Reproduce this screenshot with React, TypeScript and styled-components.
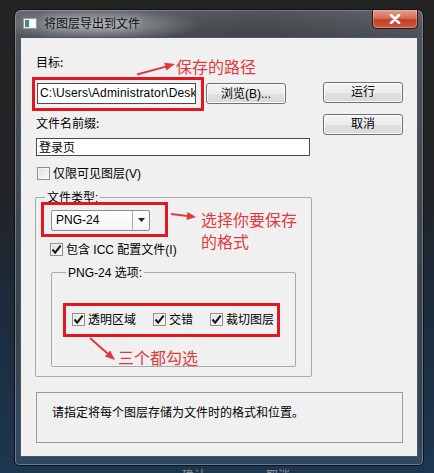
import React from "react";
import styled, { createGlobalStyle } from "styled-components";

const Global = createGlobalStyle`
  html, body { margin: 0; padding: 0; }
  body {
    width: 434px; height: 473px; overflow: hidden; background: #202022;
    font-family: "Liberation Sans", "Noto Sans CJK SC", sans-serif;
  }
  * { box-sizing: border-box; }
`;

const FONT = `"Liberation Sans", "Noto Sans CJK SC", sans-serif`;
const CJK = `"Noto Sans CJK SC", sans-serif`;
const RED = "#e3171f";
const RED_TEXT = "#e0393c";

const Desktop = styled.div`
  width: 434px;
  height: 473px;
  overflow: hidden;
  padding: 9px 10px 0 14px;
  background: linear-gradient(180deg, #232324 0%, #222326 40%, #1c2a3a 62%, #1d3650 100%);
`;

const Win = styled.div`
  width: 410px;
  height: 457px;
  display: flex;
  flex-direction: column;
  border: 1px solid #101214;
  border-radius: 7px 7px 5px 5px;
  background: linear-gradient(180deg, #666b71 0px, #4e535a 30px, #454b53 140px, #39424d 300px, #2f4862 100%);
  box-shadow: inset 0 0 0 1px rgba(255, 255, 255, 0.28);
  padding: 0 5px 8px 5px;
`;

const TitleBar = styled.div`
  height: 27px;
  display: flex;
  align-items: center;
  margin: 0 -5px;
  padding-left: 8px;
  border-radius: 6px 6px 0 0;
  background:
    radial-gradient(ellipse 100px 17px at 85px 15px, rgba(210, 214, 218, 0.62), rgba(210, 214, 218, 0) 100%),
    linear-gradient(90deg, rgba(0,0,0,0) 0%, rgba(0,0,0,0.2) 60%, rgba(0,0,0,0.05) 100%);
`;

const TitleText = styled.span`
  margin-left: 7px;
  font: 12px/16px ${CJK};
  color: #111;
  text-shadow: 0 0 6px rgba(255, 255, 255, 0.7);
`;

const CloseBtn = styled.div`
  margin-left: auto;
  margin-right: 5px;
  align-self: flex-start;
  width: 46px;
  height: 19px;
  border: 1px solid #3a1510;
  border-top: none;
  border-radius: 0 0 5px 5px;
  background: linear-gradient(180deg, #e2a08f 0%, #d66c57 45%, #c1402b 55%, #c95a3f 100%);
  box-shadow: inset 0 0 0 1px rgba(255, 220, 210, 0.35);
  display: flex;
  align-items: center;
  justify-content: center;
`;

const Client = styled.div`
  height: 421px;
  display: flex;
  flex-direction: column;
  padding-left: 11px;
  background: #f0f0f0;
  border: 1px solid #4e5660;
  font: 12px/16px ${FONT};
  color: #000;
`;

const TopSection = styled.div`
  display: flex;
`;

const LeftCol = styled.div`
  width: 280px;
  display: flex;
  flex-direction: column;
`;

const RightCol = styled.div`
  margin-left: 11px;
  padding-top: 44px;
  display: flex;
  flex-direction: column;
  gap: 11px;
`;

const Label = styled.div<{ $top: number }>`
  margin: ${(p) => p.$top}px 0 0 4px;
  height: 16px;
  font-family: ${CJK};
`;

const Row = styled.div<{ $mt: number }>`
  display: flex;
  align-items: center;
  margin-top: ${(p) => p.$mt}px;
`;

const Annotated = styled.div<{ $mt?: number; $ml?: number }>`
  position: relative;
  z-index: 1;
  align-self: flex-start;
  margin: ${(p) => p.$mt ?? 0}px 0 0 ${(p) => p.$ml ?? 0}px;
`;

const RedBox = styled.div<{ $pad: string }>`
  border: 3px solid ${RED};
  padding: ${(p) => p.$pad};
  display: flex;
  align-items: center;
`;

const TextInput = styled.div<{ $w: number; $h: number; $ml?: number; $mt?: number; $cjk?: boolean }>`
  width: ${(p) => p.$w}px;
  height: ${(p) => p.$h}px;
  margin: ${(p) => p.$mt ?? 0}px 0 0 ${(p) => p.$ml ?? 0}px;
  border: 1px solid #4a4a4a;
  background: #fff;
  padding: 0 2px;
  overflow: hidden;
  white-space: nowrap;
  display: flex;
  align-items: center;
  letter-spacing: ${(p) => (p.$cjk ? 0 : 0.2)}px;
  font-family: ${(p) => (p.$cjk ? CJK : FONT)};
`;

const Button = styled.div<{ $ml?: number }>`
  width: 80px;
  height: 21px;
  margin-left: ${(p) => p.$ml ?? 0}px;
  border: 1px solid #707070;
  border-radius: 3px;
  background: linear-gradient(180deg, #f4f4f4 0%, #ececec 50%, #e1e1e1 51%, #d8d8d8 100%);
  box-shadow: inset 0 0 0 1px #fbfbfb;
  display: flex;
  align-items: center;
  justify-content: center;
  font: 12px/16px ${FONT};
`;

const CheckRow = styled.div<{ $mt: number; $ml: number }>`
  display: flex;
  align-items: center;
  gap: 3px;
  height: 16px;
  margin: ${(p) => p.$mt}px 0 0 ${(p) => p.$ml}px;
`;

const Box = styled.span`
  flex: none;
  width: 13px;
  height: 13px;
  border: 1px solid #8e8f8f;
  background: linear-gradient(135deg, #dedede 0%, #fbfbfb 100%);
  box-shadow: inset 0 0 0 1px #f4f4f4;
  display: flex;
  align-items: center;
  justify-content: center;
`;

const Group = styled.fieldset<{ $w: number; $mt: number; $ml: number; $pad: string }>`
  width: ${(p) => p.$w}px;
  margin: ${(p) => p.$mt}px 0 0 ${(p) => p.$ml}px;
  padding: ${(p) => p.$pad};
  min-width: 0;
  border: 1px solid #a9a9a9;
  border-radius: 2px;
  display: flex;
  flex-direction: column;
`;

const Legend = styled.legend<{ $ml: number }>`
  margin-left: ${(p) => p.$ml}px;
  padding: 0 2px;
  font: 12px/16px ${FONT};
`;

const Select = styled.div`
  width: 99px;
  height: 21px;
  border: 1px solid #8c8c8c;
  border-radius: 2px;
  background: linear-gradient(180deg, #ffffff 0%, #f3f3f3 100%);
  display: flex;
  align-items: stretch;
`;

const SelectText = styled.span`
  flex: 1;
  padding-left: 4px;
  display: flex;
  align-items: center;
`;

const SelectArrow = styled.span`
  width: 17px;
  border-left: 1px solid #a8a8a8;
  display: flex;
  align-items: center;
  justify-content: center;
`;

const OptionRow = styled.div`
  height: 28px;
  display: flex;
  align-items: center;
  gap: 17px;
  padding: 0 3px 0 6px;
`;

const Arrow = styled.svg<{ $l: number; $t: number }>`
  position: absolute;
  left: ${(p) => p.$l}px;
  top: ${(p) => p.$t}px;
  overflow: visible;
`;

const Note = styled.div<{ $l: number; $t: number }>`
  position: absolute;
  left: ${(p) => p.$l}px;
  top: ${(p) => p.$t}px;
  font: 16px/22px ${CJK};
  color: ${RED_TEXT};
  white-space: nowrap;
`;

const Status = styled.div`
  width: 367px;
  height: 51px;
  margin: 15px 0 0 4px;
  padding: 11px 0 0 15px;
  border: 1px solid #9a9a9a;
  font-family: ${CJK};
`;

const Behind = styled.div`
  display: flex;
  padding-left: 168px;
  gap: 60px;
  font: 12px/16px ${CJK};
  color: #8a949f;
  margin-top: 1px;
`;

const Check = ({ checked }: { checked?: boolean }) => (
  <Box>
    {checked && (
      <svg width="11" height="11" viewBox="0 0 11 11">
        <path d="M1.5 5.5 L4.2 8.6 L9.6 1.6" fill="none" stroke="#141414" strokeWidth="2" />
      </svg>
    )}
  </Box>
);

const CheckItem = ({ checked, children, mt = 0, ml = 0 }: { checked?: boolean; children: React.ReactNode; mt?: number; ml?: number }) => (
  <CheckRow $mt={mt} $ml={ml}>
    <Check checked={checked} />
    <span>{children}</span>
  </CheckRow>
);

export default function App() {
  return (
    <>
      <Global />
      <Desktop>
        <Win>
          <TitleBar>
            <svg width="14" height="11" viewBox="0 0 14 11">
              <rect x="0.5" y="0.5" width="13" height="10" fill="#eef0ee" stroke="#9aa09a" />
              <rect x="2" y="2" width="4" height="7" fill="#3f8f6c" />
              <rect x="7" y="2" width="5" height="7" fill="#ffffff" />
            </svg>
            <TitleText>将图层导出到文件</TitleText>
            <CloseBtn>
              <svg width="12" height="10" viewBox="0 0 12 10">
                <path d="M2 1 L10 9 M10 1 L2 9" stroke="#ffffff" strokeWidth="2.6" strokeLinecap="round" />
              </svg>
            </CloseBtn>
          </TitleBar>
          <Client>
            <TopSection>
              <LeftCol>
                <Label $top={16}>目标:</Label>
                <Row $mt={7}>
                  <Annotated>
                    <RedBox $pad="3px 5px 4px 2px">
                      <TextInput $w={159} $h={21}>C:\Users\Administrator\Desktop</TextInput>
                    </RedBox>
                    <Arrow $l={104} $t={-15} width="40" height="16" viewBox="0 0 40 16">
                      <line x1="1" y1="12.5" x2="30" y2="4.6" stroke={RED_TEXT} strokeWidth="2" />
                      <polygon points="39,2 30.4,8.5 28.3,0.7" fill={RED_TEXT} />
                    </Arrow>
                    <Note $l={144} $t={-22}>保存的路径</Note>
                  </Annotated>
                  <Button $ml={2}>浏览(B)...</Button>
                </Row>
                <Label $top={4}>文件名前缀:</Label>
                <TextInput $w={274} $h={18} $ml={4} $mt={7} $cjk>登录页</TextInput>
                <CheckItem mt={10} ml={5}>仅限可见图层(V)</CheckItem>
              </LeftCol>
              <RightCol>
                <Button>运行</Button>
                <Button>取消</Button>
              </RightCol>
            </TopSection>

            <Group $w={277} $mt={8} $ml={3} $pad="0 5px 9px 5px">
              <Legend $ml={4}>文件类型:</Legend>
              <Annotated $mt={-4}>
                <RedBox $pad="5px 15px 3px 7px">
                  <Select>
                    <SelectText>PNG-24</SelectText>
                    <SelectArrow>
                      <svg width="7" height="4" viewBox="0 0 7 4">
                        <polygon points="0,0 7,0 3.5,4" fill="#222" />
                      </svg>
                    </SelectArrow>
                  </Select>
                </RedBox>
                <Arrow $l={128} $t={8} width="30" height="12" viewBox="0 0 30 12">
                  <line x1="2" y1="4" x2="18.5" y2="6" stroke={RED_TEXT} strokeWidth="2" />
                  <polygon points="27,7 17.6,9.9 18.5,2" fill={RED_TEXT} />
                </Arrow>
                <Note $l={160} $t={6}>
                  选择你要保存
                  <br />
                  的格式
                </Note>
              </Annotated>
              <CheckItem checked mt={5} ml={9}>包含 ICC 配置文件(I)</CheckItem>

              <Group $w={245} $mt={7} $ml={10} $pad="0 0 29px 0">
                <Legend $ml={14}>PNG-24 选项:</Legend>
                <Annotated $mt={22} $ml={11}>
                  <RedBox $pad="0">
                    <OptionRow>
                      <CheckItem checked>透明区域</CheckItem>
                      <CheckItem checked>交错</CheckItem>
                      <CheckItem checked>裁切图层</CheckItem>
                    </OptionRow>
                  </RedBox>
                  <Arrow $l={25} $t={33} width="30" height="28" viewBox="0 0 30 28">
                    <line x1="2" y1="2" x2="19.5" y2="17.4" stroke={RED_TEXT} strokeWidth="2" />
                    <polygon points="27,24 16.9,20.4 22.1,14.4" fill={RED_TEXT} />
                  </Arrow>
                  <Note $l={55} $t={43}>三个都勾选</Note>
                </Annotated>
              </Group>
            </Group>

            <Status>请指定将每个图层存储为文件时的格式和位置。</Status>
          </Client>
        </Win>
        <Behind>
          <span>确认</span>
          <span>取消</span>
        </Behind>
      </Desktop>
    </>
  );
}
